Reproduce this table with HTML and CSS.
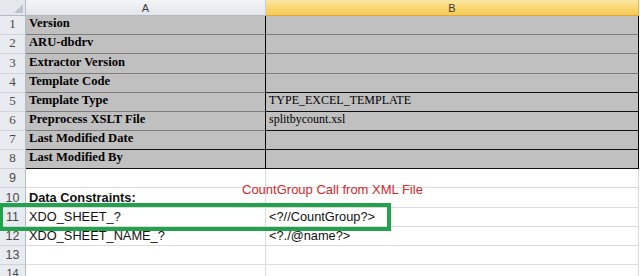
FILE: index.html
```html
<!DOCTYPE html>
<html>
<head>
<meta charset="utf-8">
<link rel="stylesheet" href="styles.css">
</head>
<body>
<div class="sheet">
  <div class="row head">
    <div class="rh corner"><span class="tri"></span></div>
    <div class="ch cha">A</div>
    <div class="ch chb">B</div>
  </div>

  <div class="row meta">
    <div class="rh serifnum">1</div>
    <div class="cell a">Version</div>
    <div class="cell b"></div>
  </div>
  <div class="row meta">
    <div class="rh serifnum">2</div>
    <div class="cell a">ARU-dbdrv</div>
    <div class="cell b"></div>
  </div>
  <div class="row meta tall">
    <div class="rh serifnum">3</div>
    <div class="cell a">Extractor Version</div>
    <div class="cell b"></div>
  </div>
  <div class="row meta">
    <div class="rh serifnum">4</div>
    <div class="cell a">Template Code</div>
    <div class="cell b dark"></div>
  </div>
  <div class="row meta">
    <div class="rh serifnum">5</div>
    <div class="cell a">Template Type</div>
    <div class="cell b dark">TYPE_EXCEL_TEMPLATE</div>
  </div>
  <div class="row meta">
    <div class="rh serifnum">6</div>
    <div class="cell a">Preprocess XSLT File</div>
    <div class="cell b dark">splitbycount.xsl</div>
  </div>
  <div class="row meta">
    <div class="rh serifnum">7</div>
    <div class="cell a dark">Last Modified Date</div>
    <div class="cell b dark"></div>
  </div>
  <div class="row meta">
    <div class="rh serifnum">8</div>
    <div class="cell a dark">Last Modified By</div>
    <div class="cell b dark"></div>
  </div>

  <div class="row plain">
    <div class="rh">9</div>
    <div class="cell a"></div>
    <div class="cell b"></div>
  </div>
  <div class="row plain tall">
    <div class="rh">10</div>
    <div class="cell a strong">Data Constraints:</div>
    <div class="cell b"></div>
  </div>
  <div class="row plain">
    <div class="rh">11</div>
    <div class="cell a">XDO_SHEET_?</div>
    <div class="cell b">&lt;?//CountGroup?&gt;</div>
  </div>
  <div class="row plain">
    <div class="rh">12</div>
    <div class="cell a">XDO_SHEET_NAME_?</div>
    <div class="cell b">&lt;?./@name?&gt;</div>
  </div>
  <div class="row plain">
    <div class="rh">13</div>
    <div class="cell a"></div>
    <div class="cell b"></div>
  </div>
  <div class="row plain last">
    <div class="rh">14</div>
    <div class="cell a"></div>
    <div class="cell b"></div>
  </div>

  <div class="note">CountGroup Call from XML File</div>
  <div class="highlight"></div>
</div>
</body>
</html>
```

FILE: styles.css
```css
* { box-sizing: border-box; }

html, body {
  margin: 0;
  padding: 0;
  background: #ffffff;
}

.sheet {
  position: relative;
  width: 640px;
  height: 276px;
  overflow: hidden;
}

.row {
  display: grid;
  grid-template-columns: 26px 240px 373px;
  height: 19px;
}

.row.tall { height: 20px; }

.row.head { height: 16px; }

.row.last { height: 12px; }

.rh {
  background: #e8ebef;
  border-right: 1px solid #b4bac3;
  border-bottom: 1px solid #cfd4da;
  color: #4a4a4a;
  font-family: "Liberation Sans", Arial, sans-serif;
  font-size: 12.5px;
  display: flex;
  align-items: flex-end;
  justify-content: center;
  padding-bottom: 2px;
}

.last .rh {
  align-items: flex-start;
  padding-top: 3px;
  padding-bottom: 0;
  font-size: 11px;
  line-height: 10px;
}

.rh.serifnum {
  font-family: "Liberation Serif", "Times New Roman", serif;
  font-size: 13px;
  padding-bottom: 2px;
}

.corner {
  position: relative;
  background: #e4e7eb;
  border-bottom: 1px solid #b4bac3;
}

.tri {
  position: absolute;
  right: 2px;
  bottom: 2px;
  width: 0;
  height: 0;
  border-left: 9px solid transparent;
  border-bottom: 9px solid #bfc4ca;
}

.ch {
  font-family: "Liberation Sans", Arial, sans-serif;
  font-size: 11px;
  color: #3c3c3c;
  display: flex;
  align-items: center;
  justify-content: center;
  padding-top: 1px;
}

.cha {
  background: linear-gradient(#f4f5f7, #e2e5ea);
  border-right: 1px solid #c9ced5;
  border-bottom: 1px solid #b4bac3;
}

.chb {
  background: linear-gradient(#fbe7a4, #f8d46b 60%, #f5ca55);
  border-right: 1px solid #e5b54a;
  border-bottom: 1px solid #e0a93c;
}

.cell {
  display: flex;
  align-items: flex-end;
  padding-left: 3px;
  white-space: nowrap;
  overflow: visible;
  color: #000;
}

.meta .cell {
  background: #c0c0c0;
  border-bottom: 1px solid #7d7d7d;
  font-family: "Liberation Serif", "Times New Roman", serif;
  font-size: 12px;
  padding-bottom: 3px;
}

.meta .cell.dark { border-bottom-color: #111; }

.meta .cell.a {
  font-weight: bold;
  font-size: 12.6px;
  border-right: 1px solid #000;
}

.meta .cell.b {
  border-right: 1px solid #000;
}

.plain .cell {
  background: #ffffff;
  border-bottom: 1px solid #dcdcdc;
  border-right: 1px solid #dcdcdc;
  font-family: "Liberation Sans", Arial, sans-serif;
  font-size: 12.8px;
  padding-bottom: 2px;
  color: #111;
}

.plain .cell.strong { font-weight: bold; }

.note {
  position: absolute;
  left: 242px;
  top: 182px;
  font-family: "Liberation Sans", Arial, sans-serif;
  font-size: 13px;
  color: #d42a2e;
  white-space: nowrap;
}

.highlight {
  position: absolute;
  left: -1px;
  top: 203px;
  width: 392px;
  height: 28px;
  border: 4px solid #22a24c;
}
```
